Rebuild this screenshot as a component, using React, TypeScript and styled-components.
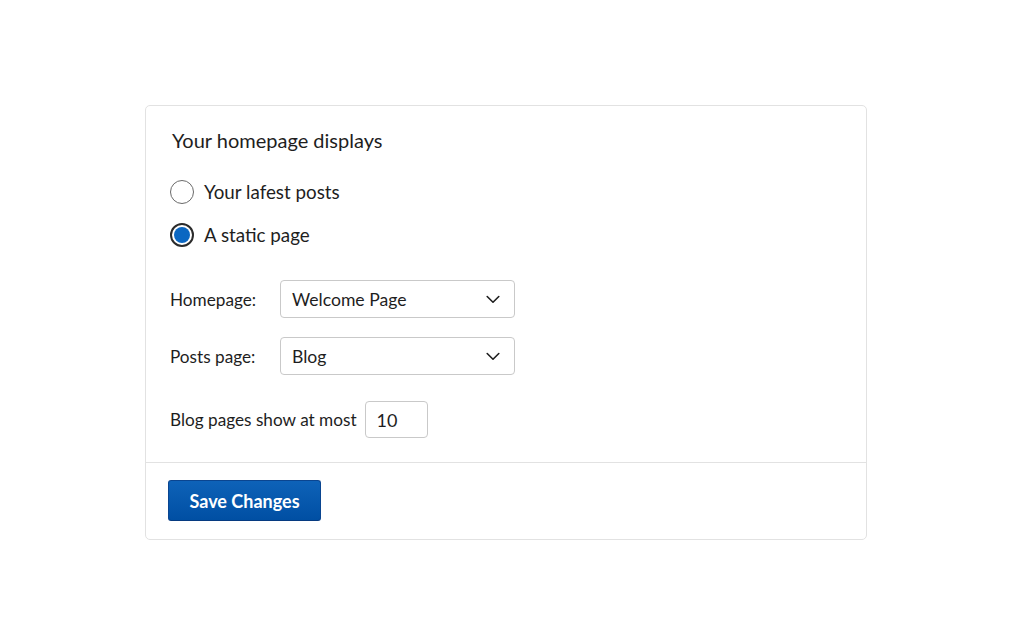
import React from "react";
import styled, { createGlobalStyle } from "styled-components";

const Global = createGlobalStyle`
  html, body { margin: 0; padding: 0; background: #ffffff; }
  body { font-family: Lato, "Noto Sans", sans-serif; color: #1e1e1e; }
`;

const Page = styled.div`
  padding: 105px 0 0 145px;
`;

const Card = styled.form`
  width: 722px;
  box-sizing: border-box;
  border: 1px solid #e2e2e2;
  border-radius: 5px;
  background: #fff;
`;

const Body = styled.div`
  padding: 21px 24px 24px 24px;
  display: flex;
  flex-direction: column;
`;

const Legend = styled.div`
  font-size: 20px;
  line-height: 26px;
  margin: 0 0 17px 2px;
`;

const RadioRow = styled.label`
  display: flex;
  align-items: center;
  gap: 10px;
  height: 43px;
  font-size: 18.8px;
  cursor: pointer;
`;

const RadioMark = styled.span<{ $checked?: boolean }>`
  width: 24px;
  height: 24px;
  box-sizing: border-box;
  border-radius: 50%;
  border: ${(p) => (p.$checked ? "2px solid #2b2b2b" : "1.2px solid #6a6a6a")};
  display: grid;
  place-items: center;
  background: #fff;
  &::after {
    content: "";
    width: 16px;
    height: 16px;
    border-radius: 50%;
    background: ${(p) => (p.$checked ? "#0b67c2" : "transparent")};
  }
`;

const FieldRow = styled.div<{ $top: number }>`
  display: flex;
  align-items: center;
  margin-top: ${(p) => p.$top}px;
  font-size: 17.2px;
`;

const Label = styled.span<{ $w?: number }>`
  width: ${(p) => (p.$w ? `${p.$w}px` : "auto")};
  margin-right: ${(p) => (p.$w ? 0 : 8)}px;
`;

const Select = styled.div`
  width: 235px;
  height: 38px;
  box-sizing: border-box;
  border: 1px solid #c9c9c9;
  border-radius: 4px;
  display: flex;
  align-items: center;
  justify-content: space-between;
  padding: 0 14px 0 11px;
  font-size: 17.6px;
`;

const NumberBox = styled.div`
  width: 63px;
  height: 37px;
  box-sizing: border-box;
  border: 1px solid #c9c9c9;
  border-radius: 4px;
  display: flex;
  align-items: center;
  padding-left: 11px;
  font-size: 18px;
`;

const Footer = styled.div`
  border-top: 1px solid #e2e2e2;
  padding: 17px 22px 18px 22px;
`;

const SaveButton = styled.button`
  width: 153px;
  height: 41px;
  border-radius: 3px;
  border: 1px solid #0a4590;
  border-bottom-color: #063a80;
  background: linear-gradient(#0e62b8, #004fa3);
  color: #fff;
  font-family: Lato, "Noto Sans", sans-serif;
  font-weight: 700;
  font-size: 18px;
  cursor: pointer;
`;

const Chevron = () => (
  <svg width="14" height="9" viewBox="0 0 14 9" fill="none">
    <path d="M1.2 1.5 7 7.2l5.8-5.7" stroke="#1e1e1e" strokeWidth="1.6" strokeLinecap="round" strokeLinejoin="round" />
  </svg>
);

export default function App() {
  return (
    <>
      <Global />
      <Page>
        <Card>
          <Body>
            <Legend>Your homepage displays</Legend>
            <RadioRow>
              <RadioMark />
              Your lafest posts
            </RadioRow>
            <RadioRow>
              <RadioMark $checked />
              A static page
            </RadioRow>
            <FieldRow $top={24}>
              <Label $w={110}>Homepage:</Label>
              <Select>
                Welcome Page
                <Chevron />
              </Select>
            </FieldRow>
            <FieldRow $top={19}>
              <Label $w={110}>Posts page:</Label>
              <Select>
                Blog
                <Chevron />
              </Select>
            </FieldRow>
            <FieldRow $top={26}>
              <Label>Blog pages show at most</Label>
              <NumberBox>10</NumberBox>
            </FieldRow>
          </Body>
          <Footer>
            <SaveButton type="button">Save Changes</SaveButton>
          </Footer>
        </Card>
      </Page>
    </>
  );
}
